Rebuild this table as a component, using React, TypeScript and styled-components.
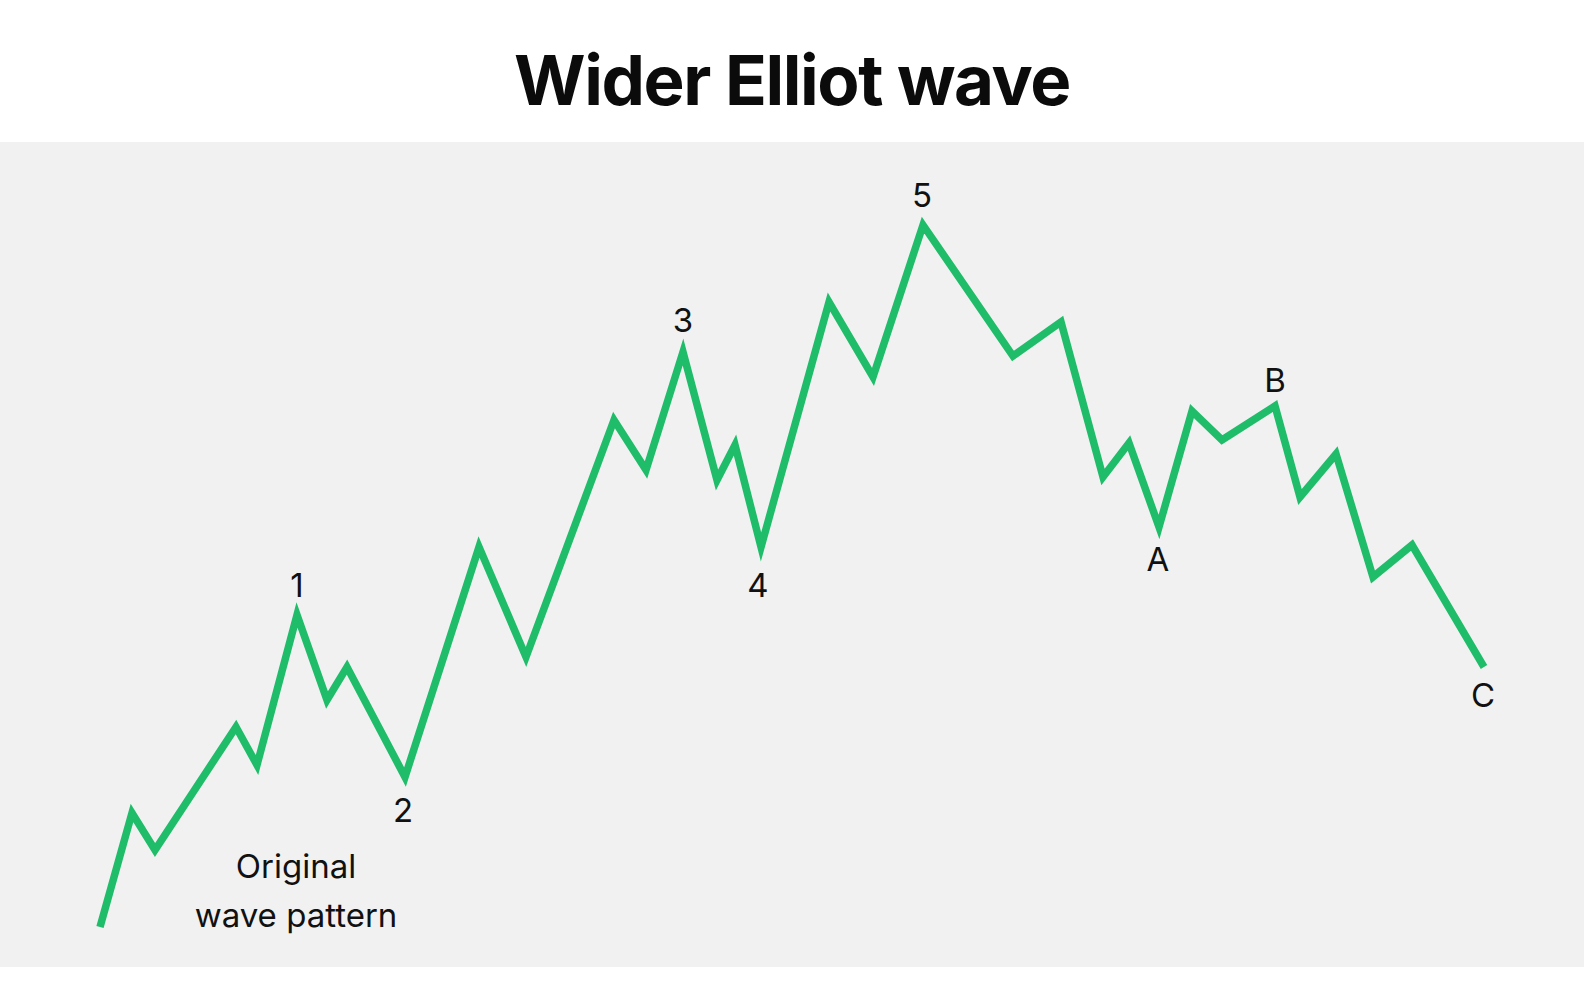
import React from "react";
import styled, { createGlobalStyle } from "styled-components";

const GlobalStyle = createGlobalStyle`
  html, body {
    margin: 0;
    padding: 0;
    background: #ffffff;
  }
  body {
    font-family: Inter, "Liberation Sans", Arial, sans-serif;
    color: #111111;
  }
`;

const Page = styled.div`
  width: 1584px;
  height: 1006px;
  display: flex;
  flex-direction: column;
  background: #ffffff;
`;

const Header = styled.header`
  height: 142px;
  display: flex;
  align-items: flex-start;
  justify-content: center;
`;

const Title = styled.h1`
  margin: 40px 0 0;
  font-family: Inter, "Liberation Sans", Arial, sans-serif;
  font-weight: 700;
  font-size: 69px;
  line-height: 80px;
  letter-spacing: -1.4px;
  color: #0b0b0b;
`;

const ChartPanel = styled.section`
  height: 825px;
  background: #f1f1f1;
`;

const ChartSvg = styled.svg`
  display: block;
  width: 100%;
  height: 100%;
`;

const Label = styled.text`
  font-family: Inter, "Liberation Sans", Arial, sans-serif;
  font-size: 33px;
  font-weight: 400;
  fill: #111111;
`;

const PANEL_TOP = 142;

const wave: [number, number][] = [
  [100, 927], [132, 813], [155, 850], [236, 727], [257, 765], [297, 615],
  [327, 700], [347, 667], [405, 777], [479, 547], [526, 657], [614, 420],
  [646, 470], [683, 352], [717, 480], [735, 445], [761, 547], [829, 302],
  [873, 377], [923, 225], [1013, 356], [1061, 322], [1103, 477], [1129, 443],
  [1159, 527], [1192, 411], [1222, 440], [1275, 406], [1300, 497], [1336, 454],
  [1373, 577], [1412, 545], [1484, 667],
];

const labels: { text: string; x: number; y: number }[] = [
  { text: "1", x: 297, y: 597 },
  { text: "2", x: 403, y: 822 },
  { text: "3", x: 683, y: 332 },
  { text: "4", x: 758, y: 597 },
  { text: "5", x: 922, y: 207 },
  { text: "A", x: 1158, y: 571 },
  { text: "B", x: 1275, y: 392 },
  { text: "C", x: 1483, y: 707 },
  { text: "Original", x: 296, y: 878 },
  { text: "wave pattern", x: 296, y: 927 },
];

export default function App() {
  return (
    <>
      <GlobalStyle />
      <Page>
        <Header>
          <Title>Wider Elliot wave</Title>
        </Header>
        <ChartPanel>
          <ChartSvg viewBox="0 0 1584 825" preserveAspectRatio="none">
            <g transform={`translate(0, ${-PANEL_TOP})`}>
              <polyline
                points={wave.map(([x, y]) => `${x},${y}`).join(" ")}
                fill="none"
                stroke="#1fbd6a"
                strokeWidth={7.5}
                strokeLinejoin="miter"
                strokeMiterlimit={4}
                strokeLinecap="butt"
              />
              {labels.map((l) => (
                <Label key={l.text} x={l.x} y={l.y} textAnchor="middle">
                  {l.text}
                </Label>
              ))}
            </g>
          </ChartSvg>
        </ChartPanel>
      </Page>
    </>
  );
}
